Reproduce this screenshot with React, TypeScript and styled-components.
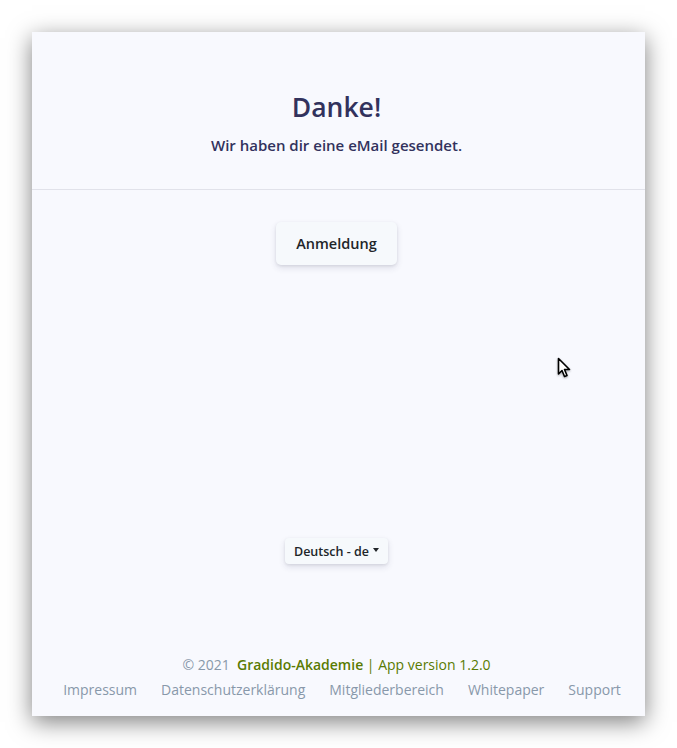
import styled, { createGlobalStyle } from "styled-components";

const GlobalStyle = createGlobalStyle`
  html, body {
    margin: 0;
    padding: 0;
    background: #ffffff;
  }
  body {
    font-family: "Open Sans", "Liberation Sans", sans-serif;
  }
`;

const Stage = styled.div`
  position: relative;
  width: 677px;
  height: 748px;
  padding: 32px 0 0 32px;
  box-sizing: border-box;
`;

const Window = styled.div`
  width: 613px;
  height: 684px;
  background: #f8f9fe;
  box-shadow: 0 6px 22px rgba(0, 0, 0, 0.5);
  display: flex;
  flex-direction: column;
`;

const Header = styled.header`
  height: 158px;
  box-sizing: border-box;
  padding: 57px 4px 0 0;
  border-bottom: 1px solid #e1e2ea;
  text-align: center;
  color: #32325d;
`;

const Title = styled.h1`
  margin: 0;
  font-size: 26.5px;
  font-weight: 600;
  line-height: 36px;
`;

const Subtitle = styled.p`
  margin: 9px 0 0;
  font-size: 15px;
  font-weight: 600;
  line-height: 22px;
`;

const Main = styled.main`
  flex: 1;
  display: flex;
  flex-direction: column;
  align-items: center;
  padding: 32px 4px 0 0;
`;

const Button = styled.button<{ $small?: boolean }>`
  font-family: inherit;
  border: none;
  background: #f6f9fc;
  color: #212529;
  border-radius: ${(p) => (p.$small ? "4px" : "5px")};
  box-shadow: 0 3px 6px rgba(50, 50, 93, 0.13), 0 1px 3px rgba(0, 0, 0, 0.08);
  font-weight: 600;
  font-size: ${(p) => (p.$small ? "12.5px" : "14.5px")};
  height: ${(p) => (p.$small ? "26px" : "43px")};
  padding: ${(p) => (p.$small ? "0 9px" : "0 20px")};
  display: inline-flex;
  align-items: center;
  gap: 4px;
  cursor: pointer;
`;

const Caret = styled.span`
  display: inline-block;
  width: 0;
  height: 0;
  border-left: 3.5px solid transparent;
  border-right: 3.5px solid transparent;
  border-top: 4px solid #212529;
  margin-top: -2px;
`;

const Spacer = styled.div`
  height: 273px;
`;

const Footer = styled.footer`
  margin-top: auto;
  padding: 0 4px 16px 0;
  text-align: center;
  font-size: 14px;
  color: #8898aa;
`;

const Copyright = styled.div`
  line-height: 20px;
`;

const Brand = styled.span<{ $bold?: boolean }>`
  color: #5a7b02;
  font-weight: ${(p) => (p.$bold ? 600 : 400)};
`;

const Links = styled.nav`
  display: flex;
  justify-content: center;
  gap: 24px;
  margin-top: 5px;
  padding-left: 11px;
  line-height: 20px;
`;

const FooterLink = styled.a`
  color: #8898aa;
  text-decoration: none;
`;

const Cursor = styled.svg`
  position: absolute;
  left: 557px;
  top: 357px;
  filter: drop-shadow(0 1px 1px rgba(0, 0, 0, 0.35));
`;

export default function App() {
  return (
    <>
      <GlobalStyle />
      <Stage>
        <Window>
          <Header>
            <Title>Danke!</Title>
            <Subtitle>Wir haben dir eine eMail gesendet.</Subtitle>
          </Header>
          <Main>
            <Button>Anmeldung</Button>
            <Spacer />
            <Button $small>
              Deutsch - de <Caret />
            </Button>
          </Main>
          <Footer>
            <Copyright>
              © 2021&nbsp; <Brand $bold>Gradido-Akademie</Brand>{" "}
              <Brand>| App version 1.2.0</Brand>
            </Copyright>
            <Links>
              <FooterLink href="#">Impressum</FooterLink>
              <FooterLink href="#">Datenschutzerklärung</FooterLink>
              <FooterLink href="#">Mitgliederbereich</FooterLink>
              <FooterLink href="#">Whitepaper</FooterLink>
              <FooterLink href="#">Support</FooterLink>
            </Links>
          </Footer>
        </Window>
        <Cursor width="16" height="22" viewBox="0 0 16 22">
          <path
            d="M1.5 1.5 L1.5 17 L5 13.5 L7.5 19.5 L10 18.5 L7.5 12.5 L12.5 12.5 Z"
            fill="#fff"
            stroke="#000"
            strokeWidth="1.6"
            strokeLinejoin="round"
          />
        </Cursor>
      </Stage>
    </>
  );
}
